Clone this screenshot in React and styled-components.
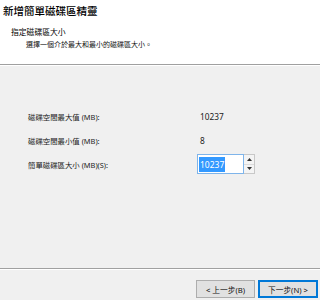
import React from 'react';
import styled, { createGlobalStyle } from 'styled-components';

const Global = createGlobalStyle`
  html, body {
    margin: 0;
    padding: 0;
    background: #f0f0f0;
  }
  body {
    font-family: "Noto Sans", "Noto Sans CJK TC", sans-serif;
    color: #000;
  }
`;

const Wizard = styled.div`
  width: 320px;
  height: 300px;
  display: flex;
  flex-direction: column;
  overflow: hidden;
`;

const Header = styled.div`
  height: 65px;
  background: #fff;
  border-bottom: 1px solid #a0a0a0;
  box-sizing: border-box;
  padding: 3px 0 0 3px;
`;

const Title = styled.div`
  font-size: 10.5px;
  line-height: 16px;
  font-weight: 500;
  color: #000;
`;

const Subtitle = styled.div`
  font-size: 7.8px;
  line-height: 11px;
  margin: 8px 0 0 8px;
  color: #000;
`;

const Description = styled.div`
  font-size: 7px;
  line-height: 10px;
  margin: 2px 0 0 23px;
  color: #111;
`;

const Body = styled.div`
  flex: 1;
  border-top: 1px solid #fff;
  border-bottom: 1px solid #a0a0a0;
  box-sizing: border-box;
  padding: 40px 0 0 28px;
`;

const Fields = styled.div`
  display: grid;
  grid-template-columns: 169px auto;
  grid-auto-rows: 20px;
  row-gap: 4px;
  align-items: center;
`;

const Label = styled.div`
  font-size: 7.4px;
  color: #222;
`;

const Value = styled.div`
  font-size: 8.3px;
  color: #222;
  padding-left: 3px;
`;

const Spinner = styled.div`
  display: flex;
  align-items: stretch;
  height: 20px;
`;

const Input = styled.div`
  width: 47px;
  box-sizing: border-box;
  border: 1px solid #7eb4ea;
  background: #fff;
  display: flex;
  align-items: center;
  padding: 1px;
`;

const Selected = styled.span`
  background: #3399ff;
  color: #fff;
  font-size: 8.5px;
  line-height: 15px;
  padding: 0 1px;
`;

const Arrows = styled.div`
  width: 11px;
  display: flex;
  flex-direction: column;
  border: 1px solid #c8c8c8;
  border-left: none;
  box-sizing: border-box;
  background: #fff;
`;

const Arrow = styled.div`
  flex: 1;
  display: flex;
  align-items: center;
  justify-content: center;
  background: #f4f4f4;
  & + & {
    border-top: 1px solid #dcdcdc;
  }
`;

const Footer = styled.div`
  height: 31px;
  border-top: 1px solid #fff;
  display: flex;
  justify-content: flex-end;
  align-items: flex-start;
  padding: 10px 2px 0 0;
  gap: 3px;
  box-sizing: border-box;
`;

const Button = styled.div`
  width: ${({ primary }) => (primary ? '60px' : '59px')};
  height: 18px;
  box-sizing: border-box;
  background: #e1e1e1;
  border: ${({ primary }) => (primary ? '2px solid #0078d7' : '1px solid #adadad')};
  display: flex;
  align-items: center;
  justify-content: center;
  font-size: 7.7px;
  color: #111;
`;

const Triangle = ({ up }) => (
  <svg width="5" height="3" viewBox="0 0 5 3">
    <path d={up ? 'M0 3 L2.5 0 L5 3 Z' : 'M0 0 L2.5 3 L5 0 Z'} fill="#333" />
  </svg>
);

export default function App() {
  return (
    <Wizard>
      <Global />
      <Header>
        <Title>新增簡單磁碟區精靈</Title>
        <Subtitle>指定磁碟區大小</Subtitle>
        <Description>選擇一個介於最大和最小的磁碟區大小。</Description>
      </Header>
      <Body>
        <Fields>
          <Label>磁碟空間最大值 (MB):</Label>
          <Value>10237</Value>
          <Label>磁碟空間最小值 (MB):</Label>
          <Value>8</Value>
          <Label>簡單磁碟區大小 (MB)(S):</Label>
          <Spinner>
            <Input>
              <Selected>10237</Selected>
            </Input>
            <Arrows>
              <Arrow><Triangle up /></Arrow>
              <Arrow><Triangle /></Arrow>
            </Arrows>
          </Spinner>
        </Fields>
      </Body>
      <Footer>
        <Button>&lt; 上一步(B)</Button>
        <Button primary>下一步(N) &gt;</Button>
      </Footer>
    </Wizard>
  );
}
